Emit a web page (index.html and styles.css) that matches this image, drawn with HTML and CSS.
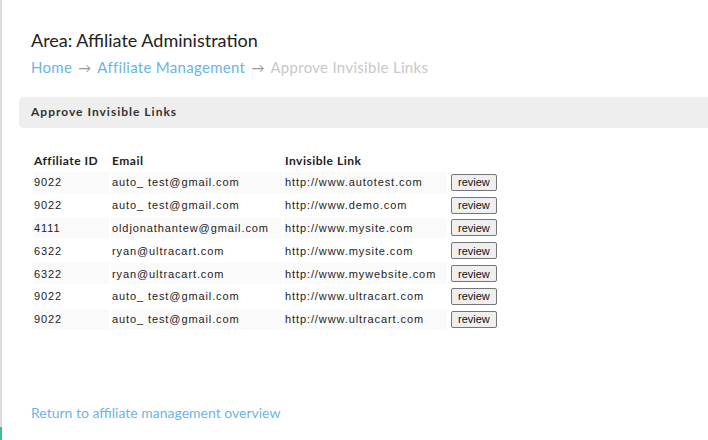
FILE: index.html
```html
<!DOCTYPE html>
<html>
<head>
<meta charset="utf-8" />
<title>Approve Invisible Links</title>
<link rel="stylesheet" href="styles.css">
</head>
<body>
	<div class="page">
		<div class="pageTitle">
			<h1>Area: Affiliate Administration</h1>
			<p class="crumbs">
				<a href="#">Home</a> <span class="arrow">&rarr;</span> <a href="#">Affiliate Management</a> <span class="arrow">&rarr;</span> <span class="current">Approve Invisible Links</span>
			</p>
		</div>

		<div class="panelhead">Approve Invisible Links</div>

		<table class="links">
			<tr>
				<th class="c-id">Affiliate ID</th>
				<th class="c-mail">Email</th>
				<th class="c-link">Invisible Link</th>
				<th></th>
			</tr>
			<tr class="odd">
				<td>9022</td>
				<td>auto_ test@gmail.com</td>
				<td>http://www.autotest.com</td>
				<td class="act"><button>review</button></td>
			</tr>
			<tr>
				<td>9022</td>
				<td>auto_ test@gmail.com</td>
				<td>http://www.demo.com</td>
				<td class="act"><button>review</button></td>
			</tr>
			<tr class="odd">
				<td>4111</td>
				<td>oldjonathantew@gmail.com</td>
				<td>http://www.mysite.com</td>
				<td class="act"><button>review</button></td>
			</tr>
			<tr>
				<td>6322</td>
				<td>ryan@ultracart.com</td>
				<td>http://www.mysite.com</td>
				<td class="act"><button>review</button></td>
			</tr>
			<tr class="odd">
				<td>6322</td>
				<td>ryan@ultracart.com</td>
				<td>http://www.mywebsite.com</td>
				<td class="act"><button>review</button></td>
			</tr>
			<tr>
				<td>9022</td>
				<td>auto_ test@gmail.com</td>
				<td>http://www.ultracart.com</td>
				<td class="act"><button>review</button></td>
			</tr>
			<tr class="odd">
				<td>9022</td>
				<td>auto_ test@gmail.com</td>
				<td>http://www.ultracart.com</td>
				<td class="act"><button>review</button></td>
			</tr>
		</table>

		<p class="back"><a href="#">Return to affiliate management overview</a></p>
	</div>
</body>
</html>
```

FILE: styles.css
```css
html, body {
	margin: 0;
	padding: 0;
	background: #fff;
}

body {
	font-family: Lato, "Liberation Sans", Arial, sans-serif;
	color: #222;
}

a {
	color: #6cb4e4;
	text-decoration: none;
}

.page {
	height: 440px;
	box-sizing: border-box;
	padding: 0 0 0 19px;
	overflow: hidden;
	background: linear-gradient(to bottom, #dcdcdc 427px, #3dbf95 427px) no-repeat 0 0 / 2px 100%;
}

.pageTitle {
	padding-left: 12px;
	padding-top: 29px;
}

.pageTitle h1 {
	font-size: 18px;
	font-weight: normal;
	margin: 0;
	line-height: 22px;
}

.crumbs {
	font-size: 15px;
	letter-spacing: 0.3px;
	color: #999;
	margin: 5px 0 0 0;
	line-height: 22px;
}

.crumbs .arrow {
	font-size: 13px;
	margin: 0 2px;
}

.crumbs .current {
	color: #c8c8c8;
}

.panelhead {
	margin-top: 18px;
	height: 31px;
	line-height: 30px;
	background: #eee;
	border-radius: 5px 0 0 5px;
	padding-left: 12px;
	font-size: 12px;
	font-weight: bold;
	letter-spacing: 1px;
	color: #333;
}

.links {
	margin: 20px 0 0 12px;
	border-spacing: 2px;
}

.links th {
	font-size: 12px;
	font-weight: bold;
	letter-spacing: 0.5px;
	text-align: left;
	height: 20px;
	padding: 0 1px;
	color: #222;
}

.links th.c-id {
	width: 74px;
}

.links th.c-mail {
	width: 169px;
}

.links th.c-link {
	width: 161px;
}

.links td {
	font-family: "Liberation Sans", Arial, sans-serif;
	font-size: 11px;
	letter-spacing: 0.9px;
	height: 20.8px;
	line-height: 14px;
	padding: 0 1px;
	color: #222;
}

.links tr.odd td {
	background: #fafafa;
}

.links tr.odd td.act {
	background: none;
}

.links td.act {
	padding: 0 2px;
}

.links button {
	font-family: "Liberation Sans", Arial, sans-serif;
	font-size: 11px;
	letter-spacing: 0;
	color: #111;
	background: #efefef;
	border: 1px solid #767676;
	border-radius: 2px;
	padding: 0 6px;
	height: 17px;
	line-height: 14px;
	display: block;
}

.back {
	margin: 72px 0 0 12px;
	font-size: 14px;
}
```
